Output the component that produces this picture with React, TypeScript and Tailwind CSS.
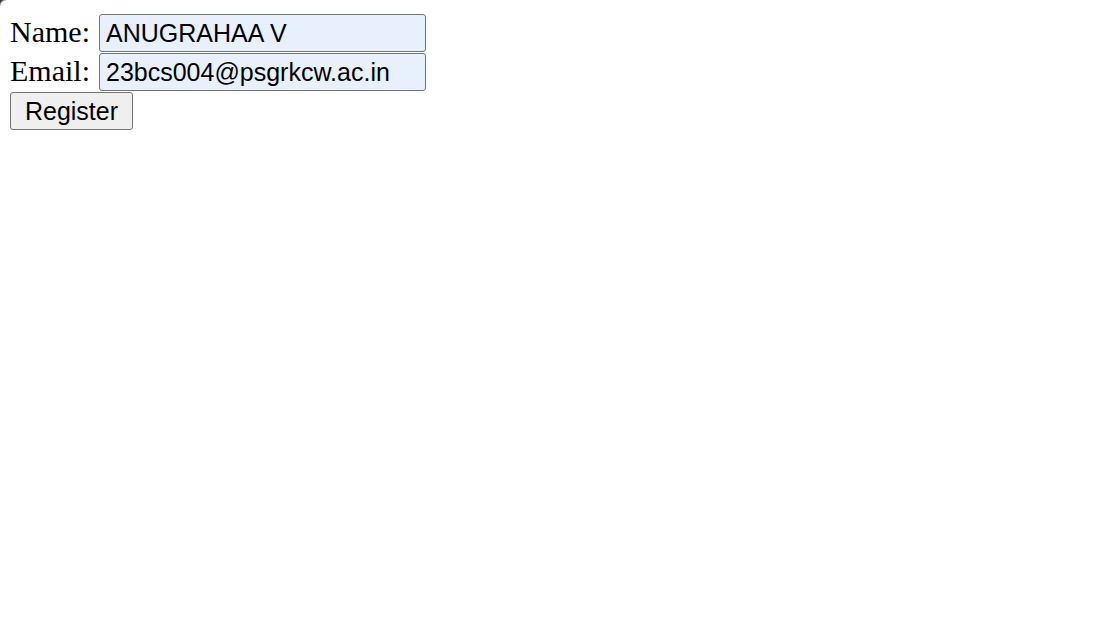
import React from "react";

export default function App() {
  return (
    <div className="relative min-h-[618px] w-full bg-white">
      <div className="absolute left-0 top-0 h-[6px] w-[6px] bg-[radial-gradient(circle_at_100%_100%,transparent_5px,#3a3a3a_7px)]" />
      <div className="pl-[10px] pt-[14px] text-black">
        <div className="mb-px flex items-baseline font-['Liberation_Serif',serif] text-[30px] leading-[34px]">
          <span className="w-[89px] whitespace-pre">Name: </span>
          <input
            defaultValue="ANUGRAHAA V"
            className="h-[38px] w-[327px] rounded-[3px] border border-[#767676] bg-[#e8f0fe] px-[6px] font-['Liberation_Sans',Arial,sans-serif] text-[25px] leading-[29px] text-black outline-none"
          />
        </div>
        <div className="mb-px flex items-baseline font-['Liberation_Serif',serif] text-[30px] leading-[34px]">
          <span className="w-[89px] whitespace-pre">Email: </span>
          <input
            defaultValue="23bcs004@psgrkcw.ac.in"
            className="h-[38px] w-[327px] rounded-[3px] border border-[#767676] bg-[#e8f0fe] px-[6px] font-['Liberation_Sans',Arial,sans-serif] text-[25px] leading-[29px] text-black outline-none"
          />
        </div>
        <button className="flex h-[38px] w-[123px] items-center justify-center rounded-[3px] border border-[#767676] bg-[#efefef] font-['Liberation_Sans',Arial,sans-serif] text-[25px] leading-[29px] text-black">
          Register
        </button>
      </div>
    </div>
  );
}
